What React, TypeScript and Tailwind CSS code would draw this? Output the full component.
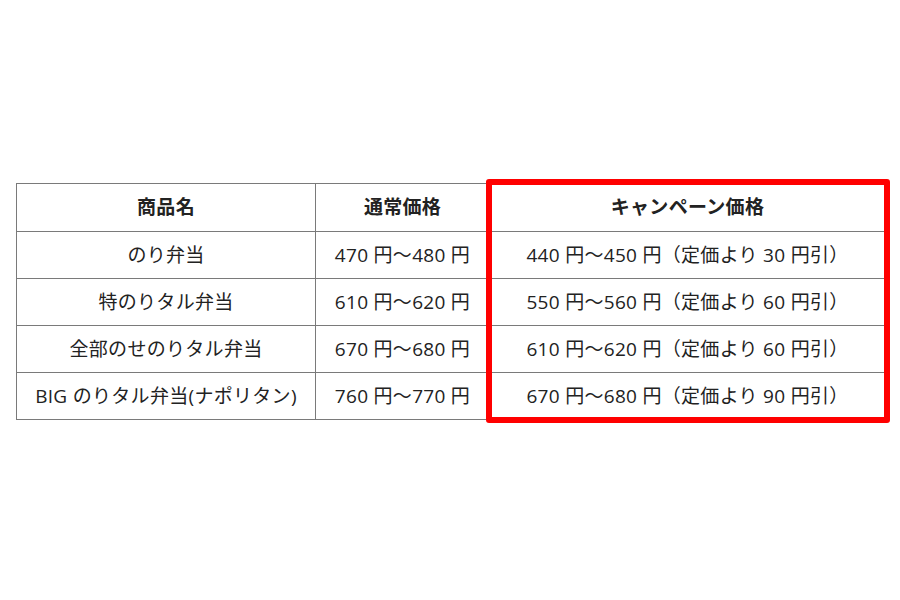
import React from "react";

const rows = [
  ["のり弁当", "470 円～480 円", "440 円～450 円（定価より 30 円引）"],
  ["特のりタル弁当", "610 円～620 円", "550 円～560 円（定価より 60 円引）"],
  ["全部のせのりタル弁当", "670 円～680 円", "610 円～620 円（定価より 60 円引）"],
  ["BIG のりタル弁当(ナポリタン)", "760 円～770 円", "670 円～680 円（定価より 90 円引）"],
];

export default function App() {
  return (
    <div
      className="w-[900px] h-[600px] bg-white pt-[183px] pl-[16px] text-[#222]"
      style={{ fontFamily: '"Open Sans", "Noto Sans CJK JP", sans-serif' }}
    >
      <div className="relative w-[869px]">
        <table className="border-collapse w-[869px] text-[19px] tracking-[0.3px] table-fixed">
          <colgroup>
            <col className="w-[299px]" />
            <col className="w-[174px]" />
            <col className="w-[396px]" />
          </colgroup>
          <thead>
            <tr className="h-[48px]">
              <th className="border border-[#7a7a7a] font-bold text-center">商品名</th>
              <th className="border border-[#7a7a7a] font-bold text-center">通常価格</th>
              <th className="border border-[#7a7a7a] font-bold text-center">キャンペーン価格</th>
            </tr>
          </thead>
          <tbody>
            {rows.map((r, i) => (
              <tr key={i} className="h-[47px]">
                <td className="border border-[#7a7a7a] text-center whitespace-nowrap">{r[0]}</td>
                <td className="border border-[#7a7a7a] text-center whitespace-nowrap">{r[1]}</td>
                <td className="border border-[#7a7a7a] text-center whitespace-nowrap">{r[2]}</td>
              </tr>
            ))}
          </tbody>
        </table>
        <div className="absolute left-[470px] top-[-4px] w-[404px] h-[244px] border-[6px] border-[#ff0000] rounded-[3px]" />
      </div>
    </div>
  );
}
